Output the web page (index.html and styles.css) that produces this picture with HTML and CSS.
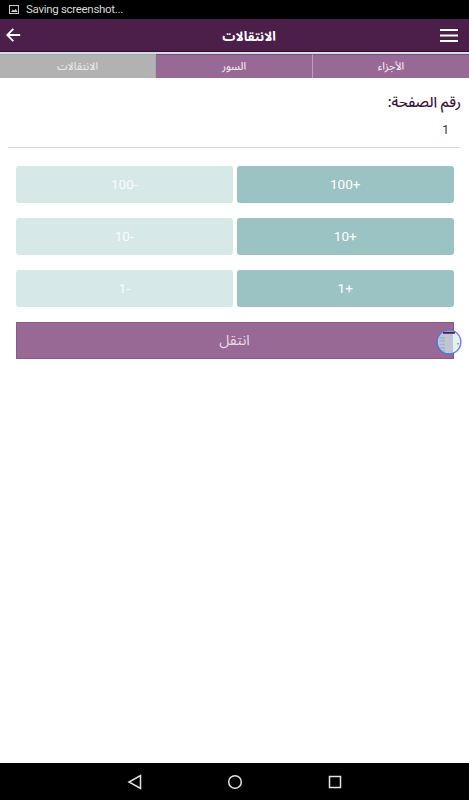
FILE: index.html
```html
<!DOCTYPE html>
<html lang="ar" dir="rtl">
<head>
    <meta charset="UTF-8">
    <meta name="viewport" content="width=device-width, initial-scale=1.0">
    <title>الانتقالات</title>
    <link rel="stylesheet" href="styles.css">
</head>
<body>
    <div class="status-bar" dir="ltr">
        <svg class="status-icon" width="10" height="9" viewBox="0 0 10 9">
            <rect x="0.5" y="0.5" width="9" height="8" fill="none" stroke="#c8c8c8"/>
            <path d="M2 7 L4 4.5 L5.2 5.8 L6.8 4 L8.5 7 Z" fill="#d8d8d8"/>
        </svg>
        <span>Saving screenshot...</span>
    </div>

    <header class="header">
        <button class="icon-btn" aria-label="القائمة">
            <svg width="18" height="14" viewBox="0 0 18 14">
                <path d="M0 2H18M0 7.5H18M0 13H18" stroke="#fff" stroke-width="2"/>
            </svg>
        </button>
        <h1>الانتقالات</h1>
        <button class="icon-btn" aria-label="رجوع">
            <svg width="15" height="14" viewBox="0 0 15 14">
                <path d="M7.3 0.8L1.2 7L7.3 13.2M1.4 7H14.2" fill="none" stroke="#fff" stroke-width="1.8"/>
            </svg>
        </button>
    </header>

    <nav class="tabs">
        <a class="tab">الأجزاء</a>
        <a class="tab">السور</a>
        <a class="tab active">الانتقالات</a>
    </nav>

    <main class="content">
        <label class="page-label" for="page">رقم الصفحة:</label>
        <div class="page-input" id="page">1</div>

        <div class="buttons">
            <button class="step">+100</button>
            <button class="step minus">-100</button>
            <button class="step">+10</button>
            <button class="step minus">-10</button>
            <button class="step">+1</button>
            <button class="step minus">-1</button>
            <button class="go">انتقل</button>
        </div>
    </main>

    <!-- floating capture bubble -->
    <svg class="bubble" width="30" height="30" viewBox="0 0 30 30">
        <defs>
            <clipPath id="round"><circle cx="15" cy="15" r="11.5"/></clipPath>
            <linearGradient id="ring" x1="0" y1="1" x2="1" y2="0">
                <stop offset="0" stop-color="#1c86f2"/>
                <stop offset="1" stop-color="#8a70ee"/>
            </linearGradient>
        </defs>
        <circle cx="15" cy="15" r="13" fill="#604090" opacity="0.18"/>
        <g clip-path="url(#round)">
            <rect width="30" height="30" fill="#e2f1f3"/>
            <rect width="19" height="30" fill="#c0c5d6"/>
            <path d="M5.5 11H11M5.5 14H11M5.5 17.5H11M5.5 21H11M7 24H11" stroke="#a4b2c1" stroke-width="1.5"/>
            <path d="M9 5.8H21" stroke="#44243f" stroke-width="2"/>
            <rect x="23.5" y="16" width="1" height="1.5" fill="#555"/>
        </g>
        <circle cx="15" cy="15" r="11.8" fill="none" stroke="url(#ring)" stroke-width="1.2"/>
    </svg>

    <footer class="nav-bar" dir="ltr">
        <svg width="16" height="16" viewBox="0 0 16 16">
            <path d="M13.5 1.5V14.5L2 8Z" fill="none" stroke="#e4e4e4" stroke-width="1.5"/>
        </svg>
        <svg width="16" height="16" viewBox="0 0 16 16">
            <circle cx="8" cy="8" r="6.3" fill="none" stroke="#e4e4e4" stroke-width="1.5"/>
        </svg>
        <svg width="16" height="16" viewBox="0 0 16 16">
            <rect x="2.5" y="2.5" width="11" height="11" fill="none" stroke="#e4e4e4" stroke-width="1.5"/>
        </svg>
    </footer>
</body>
</html>
```
FILE: styles.css
```css
* {
    box-sizing: border-box;
}

body {
    margin: 0;
    height: 100vh;
    display: flex;
    flex-direction: column;
    background: #fff;
    font-family: Roboto, "Noto Sans Arabic", "DejaVu Sans", sans-serif;
    overflow: hidden;
}

button {
    border: none;
    padding: 0;
    font-family: inherit;
}

.status-bar {
    height: 19px;
    padding: 0 9px 1px;
    display: flex;
    align-items: center;
    gap: 7px;
    background: #000;
    color: #d8d8d8;
    font-size: 11.5px;
    letter-spacing: -0.3px;
}

.status-icon {
    margin-top: 1px;
}

.header {
    height: 33px;
    padding: 0 11px 0 6px;
    display: flex;
    align-items: center;
    justify-content: space-between;
    background: #4b1f49;
    border-bottom: 1px solid #32102f;
}

.header h1 {
    flex: 1;
    margin: 4px 0 0;
    padding-left: 37px;
    color: #fff;
    font-size: 13px;
    line-height: 20px;
    text-align: center;
}

.icon-btn {
    height: 16px;
    display: flex;
    align-items: center;
    background: none;
}

.tabs {
    height: 26px;
    display: grid;
    grid-template-columns: 156px 157px 156px;
    border-top: 2px solid #d5dce8;
    border-bottom: 1px solid #dfcfdf;
}

.tab {
    display: flex;
    align-items: center;
    justify-content: center;
    padding-top: 1px;
    border-top: 1px solid #7e4d7b;
    background: #986994;
    color: #f1e7f0;
    font-size: 10.5px;
    font-weight: 500;
}

.tab + .tab {
    border-right: 1px solid #bd9dbb;
}

.tab.active {
    border-color: #a9a9a9;
    background: #b2b2b2;
    color: #e8e8e8;
}

.content {
    flex: 1;
    padding: 13px 8px 0;
}

.page-label {
    display: block;
    height: 23px;
    color: #3b123a;
    font-size: 14.5px;
    font-weight: 500;
    line-height: 23px;
}

.page-input {
    height: 34px;
    padding: 0 12px;
    border-bottom: 1px solid #dedbd0;
    color: #333;
    font-size: 12px;
    line-height: 32px;
}

.buttons {
    display: grid;
    grid-template-columns: 216.5px 217.5px;
    grid-auto-rows: 37px;
    gap: 15.3px 4px;
    padding: 17.5px 7.5px 0;
}

.step {
    padding-bottom: 1px;
    border-radius: 3px;
    background: #9bc3c3;
    color: #fff;
    font-size: 13.5px;
}

.step.minus {
    background: #d6e8e7;
    color: #f8fcfc;
}

.go {
    grid-column: span 2;
    border: 1px solid #8d5989;
    background: #986994;
    color: #e6dae5;
    font-size: 14.5px;
}

.bubble {
    position: absolute;
    left: 434px;
    top: 327px;
}

.nav-bar {
    height: 37px;
    display: flex;
    align-items: center;
    justify-content: center;
    gap: 84px;
    background: #000;
}
```
